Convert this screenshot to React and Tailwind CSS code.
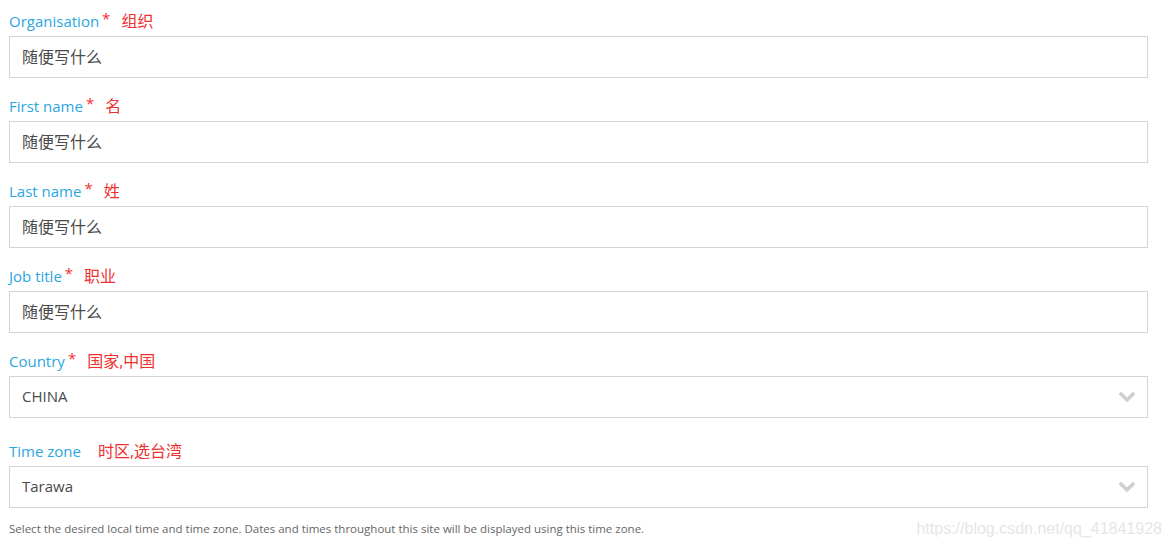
const FONT = { fontFamily: '"Open Sans", "Noto Sans CJK SC", sans-serif' };

const FIELDS = [
  { label: 'Organisation', note: '组织', value: '随便写什么', required: true },
  { label: 'First name', note: '名', value: '随便写什么', required: true },
  { label: 'Last name', note: '姓', value: '随便写什么', required: true },
  { label: 'Job title', note: '职业', value: '随便写什么', required: true },
  { label: 'Country', note: '国家,中国', value: 'CHINA', required: true, select: true },
  { label: 'Time zone', note: '时区,选台湾', value: 'Tarawa', select: true },
];

function Chevron() {
  return (
    <svg width="16" height="12" viewBox="0 0 16 12" className="text-[#cfcfcf]">
      <polyline points="2,3 8,9 14,3" fill="none" stroke="currentColor" strokeWidth="3.6" strokeLinecap="round" strokeLinejoin="round" />
    </svg>
  );
}

function Field({ label, note, value, required, select, last }) {
  return (
    <div className={last ? '' : select ? 'mb-[24px]' : 'mb-[19px]'}>
      <div className="flex items-start h-[18px] leading-[19px] mb-[6px]">
        <span className="text-[15px] text-[#2aa7e1]">{label}</span>
        {required && <span className="text-[15px] text-[#f0302f] leading-[10px] ml-[3px] mt-[1px]">*</span>}
        <span className={`text-[16px] text-[#f0302f] ${required ? 'ml-[11px]' : 'ml-[17px]'}`}>{note}</span>
      </div>
      <div className="h-[42px] border border-[#d4d4d4] bg-white flex items-center justify-between pl-[12px] pr-[12px]">
        <span className={`${select ? 'text-[15px] -mt-[2px]' : 'text-[16px]'} text-[#4a4a4a]`}>{value}</span>
        {select && <Chevron />}
      </div>
    </div>
  );
}

export default function App() {
  return (
    <div className="w-[1171px] h-[544px] bg-white pl-[9px] pr-[23px] pt-[12px] overflow-hidden" style={FONT}>
      {FIELDS.map((f, i) => (
        <Field key={f.label} {...f} last={i === FIELDS.length - 1} />
      ))}
      <div className="flex items-center justify-between mt-[9px]">
        <p className="text-[11.5px] text-[#666]">
          Select the desired local time and time zone. Dates and times throughout this site will be displayed using this time zone.
        </p>
        <span className="text-[16px] text-[#e6e6e6] -mr-[14px]" style={{ fontFamily: '"Liberation Sans", sans-serif' }}>
          https://blog.csdn.net/qq_41841928
        </span>
      </div>
    </div>
  );
}
